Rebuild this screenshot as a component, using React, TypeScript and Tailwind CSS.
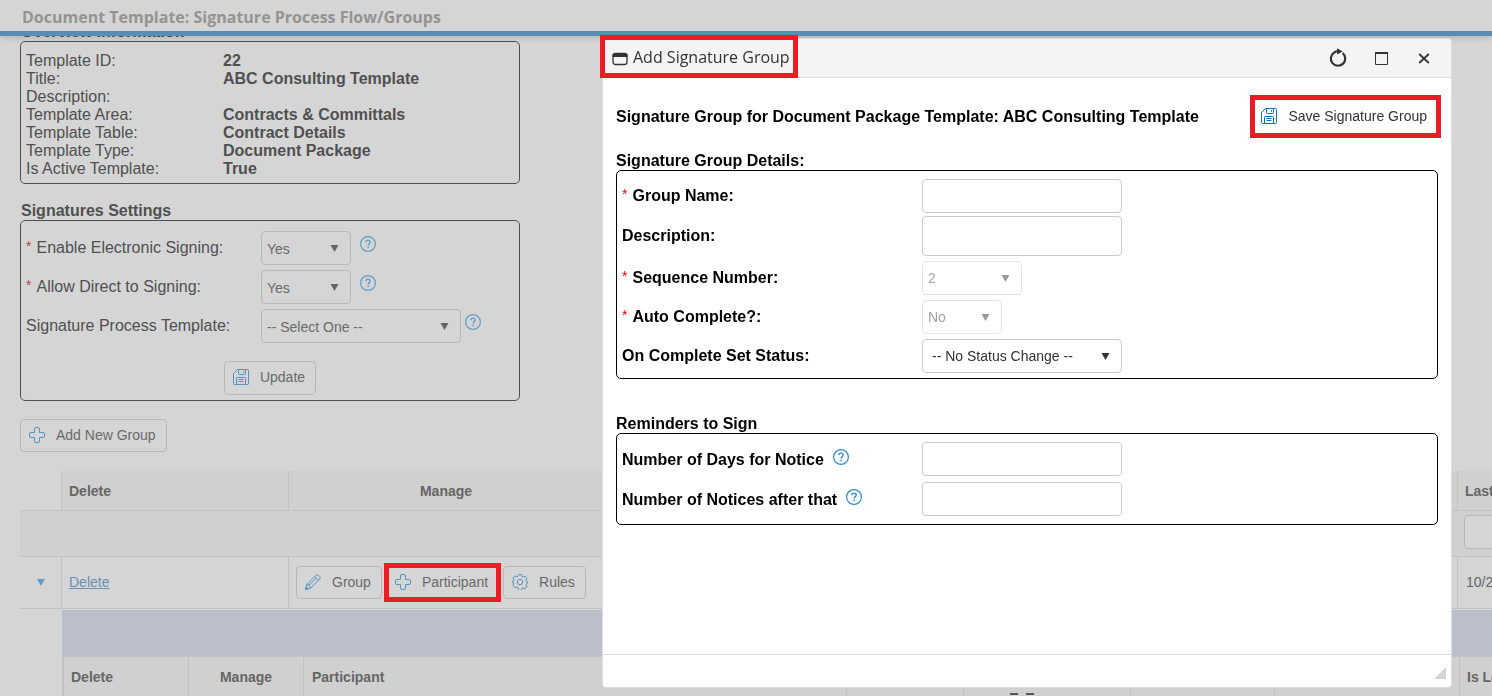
import React from 'react';

type IconProps = { className?: string };

const SaveIcon: React.FC<IconProps> = ({ className = 'text-[#0d72b9]' }) => (
  <svg viewBox="0 0 16 16" className={`size-4 shrink-0 ${className}`} fill="none" stroke="currentColor" aria-hidden="true">
    <path d="M4.5.5h10a1 1 0 0 1 1 1v13a1 1 0 0 1-1 1h-13a1 1 0 0 1-1-1v-10z" />
    <path d="M5.500.5v4.200c0 .5.3.8.8.8h5.400c.5 0 .8-.3.8-.8V.5M10.500 2v1.800M3.500 15.500v-6.200c0-.5.3-.8.8-.8h7.400c.5 0 .8.3.8.8v6.200M5.500 10.500h5M5.500 12.500h5" />
  </svg>
);

const PlusIcon = () => (
  <svg viewBox="0 0 16 16" className="size-4 shrink-0 text-[#5793bf]" fill="none" stroke="currentColor" aria-hidden="true">
    <path d="M5.500 5.500V2a1.500 1.500 0 0 1 1.500-1.500h2A1.500 1.500 0 0 1 10.500 2v3.500H14A1.500 1.500 0 0 1 15.500 7v2a1.500 1.500 0 0 1-1.500 1.500h-3.500V14A1.500 1.500 0 0 1 9 15.500H7A1.500 1.500 0 0 1 5.500 14v-3.500H2A1.500 1.500 0 0 1 .5 9V7A1.500 1.500 0 0 1 2 5.500z" />
  </svg>
);

const PencilIcon = () => (
  <svg viewBox="0 0 16 16" className="size-4 shrink-0 text-[#5793bf]" fill="none" stroke="currentColor" aria-hidden="true">
    <path d="M.6 15.400l1.300-5L10.900 1.400a2 2 0 0 1 2.800 0l.9.9a2 2 0 0 1 0 2.800L5.600 14.100zM1.900 10.400c1.900.2 3.500 1.800 3.700 3.700M9.700 2.600l3.700 3.700M3.800 11.500l7.600-7.600" />
    <path d="M.6 15.400l.7-2.500 1.800 1.800z" fill="currentColor" />
  </svg>
);

const GearIcon = () => (
  <svg viewBox="0 0 16 16" className="size-4 shrink-0 text-[#5793bf]" fill="none" stroke="currentColor" strokeLinejoin="round" aria-hidden="true">
    <circle cx="8" cy="8" r="2.700" />
    <path d="M6.500.6h3l.5 1.900 1.200.6 1.800-.9 2 2.200-1 1.700.3 1 1.200.6v1.600l-1.200.6-.3 1 1 1.700-2 2.200-1.800-.9-1.200.6-.5 1.900h-3L6 13.500l-1.200-.6-1.800.9-2-2.200 1-1.700-.3-1L.5 8.800V7.200l1.200-.5.3-1-1-1.700 2-2.200 1.800.9L6 2.500z" />
  </svg>
);

const HelpIcon: React.FC<IconProps> = ({ className }) => (
  <svg viewBox="0 0 16 16" className={`size-4 shrink-0 ${className}`} fill="none" stroke="currentColor" aria-hidden="true">
    <circle cx="8" cy="8" r="7.400" strokeWidth="1.200" />
    <path d="M5.900 6.200c0-1.300.9-2.100 2.100-2.100s2.200.8 2.200 2c0 1.500-2 1.600-2 3.300" strokeWidth="1.400" />
    <circle cx="8.200" cy="11.400" r=".6" fill="currentColor" strokeWidth=".6" />
  </svg>
);

const looks = {
  dimmed: { box: 'border-[#b9b9b9] pt-0.5 pl-[5px] text-[#6a6a6a]', arrow: 'text-[#656565]' },
  disabled: { box: 'border-[#e4e4e4] pl-[5px] font-normal text-[#a3a3a3]', arrow: 'text-[#999]' },
  active: { box: 'border-[#ccc] pl-[9px] font-normal text-[#333]', arrow: 'text-[#333]' }
};

interface SelectFieldProps {
  id: string;
  value: string;
  width: string;
  look: keyof typeof looks;
}

const SelectField: React.FC<SelectFieldProps> = ({ id, value, width, look }) => (
  <div className={`relative ${width}`}>
    <select id={id} disabled={look === 'disabled'} className={`h-[34px] w-full appearance-none rounded border bg-transparent pr-6 text-sm opacity-100 ${looks[look].box}`}>
      <option>{value}</option>
    </select>
    <svg viewBox="0 0 9 7" className={`pointer-events-none absolute top-3.5 right-3 h-[7px] w-[9px] ${looks[look].arrow}`} aria-hidden="true">
      <path d="M.5 0h8l-4 7z" fill="currentColor" />
    </svg>
  </div>
);

const Required: React.FC<IconProps> = ({ className = 'text-[#f00000]' }) => (
  <span className={`mr-[5px] align-[2px] text-sm leading-none font-normal ${className}`}>*</span>
);

const toolButton = 'flex items-center gap-[11px] border border-[#b9b9b9] pr-2.5 pb-0.5 pl-2 text-sm text-[#6a6a6a]';

const overview = [
  { label: 'Template ID:', value: '22' },
  { label: 'Title:', value: 'ABC Consulting Template' },
  { label: 'Description:', value: '' },
  { label: 'Template Area:', value: 'Contracts & Committals' },
  { label: 'Template Table:', value: 'Contract Details' },
  { label: 'Template Type:', value: 'Document Package' },
  { label: 'Is Active Template:', value: 'True' }
];

const settings = [
  { id: 'esign', label: 'Enable Electronic Signing:', value: 'Yes', required: true, width: 'w-[90px]', gap: 'gap-[9px]' },
  { id: 'direct', label: 'Allow Direct to Signing:', value: 'Yes', required: true, width: 'w-[90px]', gap: 'gap-[9px]' },
  { id: 'process', label: 'Signature Process Template:', value: '-- Select One --', required: false, width: 'w-[200px]', gap: 'gap-1' }
];

const TemplatePage = () => (
  <main className="-mt-[13px] text-[#505050]">
    <div className="ml-5 w-[500px]">
      <h2 className="pl-px leading-[18px] font-bold">Overview Information</h2>
      <dl className="rounded-[5px] border border-[#505050] pt-2.5 pr-2 pb-[5px] pl-[5px] leading-[18px]">
        {overview.map(row => (
          <div key={row.label} className="flex h-[18px]">
            <dt className="w-[197px]">{row.label}</dt>
            <dd className="font-bold">{row.value}</dd>
          </div>
        ))}
      </dl>

      <h2 className="mt-[18px] pl-px leading-[18px] font-bold">Signatures Settings</h2>
      <form className="flex flex-col gap-[5px] rounded-[5px] border border-[#505050] px-[5px] pt-2.5 pb-[5px]">
        {settings.map(row => (
          <div key={row.id} className="flex h-[34px] items-center">
            <label htmlFor={row.id} className="w-[235px]">
              {row.required && <Required className="text-[#b04848]" />}
              {row.label}
            </label>
            <div className={`flex ${row.gap}`}>
              <SelectField id={row.id} value={row.value} width={row.width} look="dimmed" />
              <HelpIcon className="mt-[5px] text-[#639cc6]" />
            </div>
          </div>
        ))}
        <button type="button" className={`${toolButton} mt-[13px] h-[34px] self-center rounded`}>
          <SaveIcon className="text-[#5793bf]" />
          Update
        </button>
      </form>

      <button type="button" className={`${toolButton} mt-[18px] h-[33px] rounded`}>
        <PlusIcon />
        Add New Group
      </button>
    </div>

    <div className="mt-[19px] pl-5">
      <table className="w-full table-fixed border-separate border-spacing-0 text-left text-sm text-[#666]">
        <colgroup>
          <col className="w-[41px]" />
          <col className="w-[227px]" />
          <col className="w-[315px]" />
          <col />
          <col className="w-[35px]" />
        </colgroup>
        <thead>
          <tr className="h-10 bg-[#d0d0d0]">
            <th className="border-b border-[#c2c2c2] bg-[#d5d5d5]" />
            <th className="border-b border-l border-[#c2c2c2] pl-[7px]">Delete</th>
            <th className="border-b border-l border-[#c2c2c2] text-center">Manage</th>
            <th className="border-b border-l border-[#c2c2c2]" />
            <th className="overflow-hidden border-b border-l border-[#c2c2c2] pl-[7px] whitespace-nowrap">Last</th>
          </tr>
          <tr className="h-[46px] bg-[#d0d0d0]">
            <td colSpan={4} className="border-b border-[#c2c2c2]" />
            <td className="overflow-hidden border-b border-[#c2c2c2] pb-[3px] pl-[7px]">
              <input aria-label="Filter" className="block h-[34px] w-[120px] rounded border border-[#b9b9b9] bg-[#d5d5d5]" />
            </td>
          </tr>
        </thead>
        <tbody>
          <tr className="h-[52px]">
            <td className="border-b border-[#c2c2c2]">
              <button type="button" aria-label="Collapse" className="ml-[17px] block">
                <svg viewBox="0 0 8 7" className="h-[7px] w-2 text-[#639cc6]" aria-hidden="true">
                  <path d="M0 0h8L4 7z" fill="currentColor" />
                </svg>
              </button>
            </td>
            <td className="border-b border-l border-[#c2c2c2] pb-0.5 pl-[7px]">
              <a href="#delete" className="text-[#6c8fb5] underline">Delete</a>
            </td>
            <td className="border-b border-l border-[#c2c2c2] pl-[7px]">
              <div className="flex items-center gap-1">
                <button type="button" className={`${toolButton} h-[33px] rounded`}>
                  <PencilIcon />
                  Group
                </button>
                <button type="button" className={`${toolButton} h-[35px] outline-[5px] -outline-offset-3 outline-[#ed1c24]`}>
                  <PlusIcon />
                  Participant
                </button>
                <button type="button" className={`${toolButton} h-[33px] rounded`}>
                  <GearIcon />
                  Rules
                </button>
              </div>
            </td>
            <td className="border-b border-l border-[#c2c2c2]" />
            <td className="overflow-hidden border-b border-l border-[#c2c2c2] pb-0.5 pl-2 whitespace-nowrap">10/2</td>
          </tr>
        </tbody>
      </table>

      {/* Participants of the expanded group */}
      <div className="mt-px ml-[42px]">
        <div className="h-[46px] bg-[#bcbfc9]" />
        <table className="w-full table-fixed border-separate border-spacing-0 border-t border-l-2 border-[#c2c2c2] bg-[#d0d0d0] text-left text-sm text-[#666]">
          <colgroup>
            <col className="w-[124px]" />
            <col className="w-[115px]" />
            <col />
            <col className="w-[117px]" />
            <col className="w-[167px]" />
            <col className="w-[144px]" />
            <col className="w-[185px]" />
            <col className="w-[33px]" />
          </colgroup>
          <thead>
            <tr className="h-10">
              <th className="pl-[7px]">Delete</th>
              <th className="border-l border-[#c2c2c2] text-center">Manage</th>
              <th className="border-l border-[#c2c2c2] pl-2">Participant</th>
              <th className="border-l border-[#c2c2c2]" />
              <th className="border-l border-[#c2c2c2] pl-[46px] align-bottom">
                <svg viewBox="0 0 24 4" className="h-1 w-6 text-[#555]" aria-hidden="true">
                  <path d="M0 0h8v2H0zM16 0h8v2h-8z" fill="currentColor" />
                </svg>
              </th>
              <th className="border-l border-[#c2c2c2]" />
              <th className="border-l border-[#c2c2c2]" />
              <th className="overflow-hidden border-l border-[#c2c2c2] pl-[7px] whitespace-nowrap">Is Lo</th>
            </tr>
          </thead>
        </table>
      </div>
    </div>
  </main>
);

const textBox = 'block w-[200px] rounded border border-[#ccc] bg-white px-2 text-sm';

const GroupDialog = () => (
  <section role="dialog" aria-labelledby="dialog-title" className="fixed top-[38px] right-10 bottom-2 left-[602px] z-20 flex flex-col rounded border border-[#dcdcdc] bg-white text-black">
    <header className="flex h-[39px] items-center justify-between rounded-t border-b border-[#dcdcdc] bg-[#f4f4f4]">
      <h1 id="dialog-title" className="mb-[3px] -ml-[3px] flex h-[43px] items-center gap-[5px] border-[5px] border-[#ed1c24] pr-[3px] pl-[7px] font-['Open_Sans',sans-serif] text-base text-[#333]">
        <svg viewBox="0 0 16 14" className="mt-1 h-3.5 w-4" aria-hidden="true">
          <rect x="1" y="1.500" width="14" height="11" rx="2.500" fill="none" stroke="currentColor" strokeWidth="1.300" />
          <path d="M.5 5V3.500A2.500 2.500 0 0 1 3 1h10a2.500 2.500 0 0 1 2.500 2.500V5z" fill="currentColor" />
        </svg>
        Add Signature Group
      </h1>
      <div className="flex items-center gap-7 pr-5 text-[#333]">
        <button type="button" aria-label="Refresh">
          <svg viewBox="0 0 18 20" className="h-5 w-[18px]" fill="none" aria-hidden="true">
            <path d="M13.600 5a7.200 7.200 0 1 1-8.600-.4 7 7 0 0 1 4-1.400" stroke="currentColor" strokeWidth="2.200" />
            <path d="M8.200.3v6.200l5.400-3.100z" fill="currentColor" />
          </svg>
        </button>
        <button type="button" aria-label="Maximize">
          <svg viewBox="0 0 14 14" className="size-3.5" fill="none" stroke="currentColor" aria-hidden="true">
            <path d="M.5 2v11.500h12V2" />
            <path d="M0 2h13" strokeWidth="2" />
          </svg>
        </button>
        <button type="button" aria-label="Close">
          <svg viewBox="0 0 14 14" className="size-3.5" fill="none" stroke="currentColor" strokeWidth="1.800" aria-hidden="true">
            <path d="M2.200 3l9.600 9M11.800 3l-9.600 9" />
          </svg>
        </button>
      </div>
    </header>

    <div className="flex-1 px-[13px] pt-[22px]">
      <div className="flex items-center justify-between pr-0.5">
        <h2 className="font-bold">Signature Group for Document Package Template: ABC Consulting Template</h2>
        <button type="button" className="flex h-[33px] items-center gap-[11px] pr-[9px] pb-0.5 pl-1.5 text-sm text-[#333] outline-[5px] outline-[#ed1c24]">
          <SaveIcon />
          Save Signature Group
        </button>
      </div>

      <h3 className="mt-[18px] leading-[19px] font-bold">Signature Group Details:</h3>
      <div className="grid grid-cols-[300px_1fr] items-center gap-y-[5px] rounded-[5px] border border-black pt-2 pb-[5px] pl-[5px] font-bold">
        <label htmlFor="name"><Required />Group Name:</label>
        <input id="name" type="text" className={`${textBox} h-[34px]`} />
        <label htmlFor="desc" className="mb-0.5">Description:</label>
        <textarea id="desc" className={`${textBox} -mt-0.5 h-10 resize-none`} />
        <label htmlFor="seq"><Required />Sequence Number:</label>
        <SelectField id="seq" value="2" width="w-[100px]" look="disabled" />
        <label htmlFor="auto"><Required />Auto Complete?:</label>
        <SelectField id="auto" value="No" width="w-20" look="disabled" />
        <label htmlFor="status">On Complete Set Status:</label>
        <SelectField id="status" value="-- No Status Change --" width="w-[200px]" look="active" />
      </div>

      <h3 className="mt-[35px] leading-[19px] font-bold">Reminders to Sign</h3>
      <div className="grid grid-cols-[300px_1fr] items-center gap-y-1.5 rounded-[5px] border border-black py-2 pl-[5px] font-bold">
        <label htmlFor="days" className="flex items-center gap-[9px] pt-0.5">Number of Days for Notice <HelpIcon className="mb-1.5 text-[#2e8bd0]" /></label>
        <input id="days" type="text" className={`${textBox} h-[34px]`} />
        <label htmlFor="notices" className="flex items-center gap-[9px] pt-0.5">Number of Notices after that <HelpIcon className="mb-1.5 text-[#2e8bd0]" /></label>
        <input id="notices" type="text" className={`${textBox} h-[34px]`} />
      </div>
    </div>

    <footer className="flex h-[33px] items-end justify-end border-t border-[#dcdcdc] pr-[5px] pb-2">
      <svg viewBox="0 0 12 12" className="size-3 text-[#d5d5d5]" aria-hidden="true">
        <path d="M12 0v12H0z" fill="currentColor" />
      </svg>
    </footer>
  </section>
);

const App: React.FC = () => (
  <div className="h-screen overflow-hidden bg-[#d5d5d5] font-['Liberation_Sans',Arial,sans-serif] text-base">
    <header className="relative z-10 flex h-9 items-center border-b-[5px] border-[#558fb6] bg-[#d5d5d5] pt-0.5 pl-[22px] shadow-md">
      <span className="font-['Open_Sans',sans-serif] text-base font-bold text-[#939393]">Document Template: Signature Process Flow/Groups</span>
    </header>
    <TemplatePage />
    <GroupDialog />
  </div>
);

export default App;
